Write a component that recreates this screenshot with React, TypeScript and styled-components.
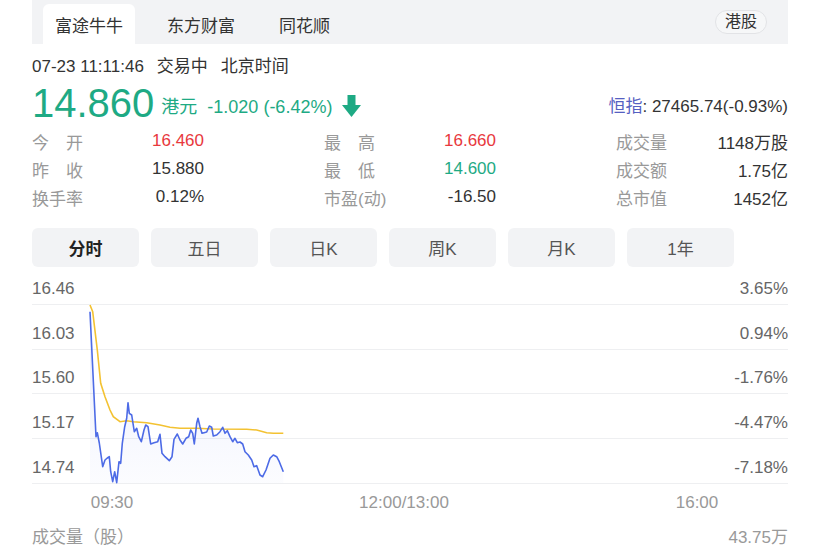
import React from 'react';
import styled, { createGlobalStyle } from 'styled-components';

const GREEN = '#1eaa84';
const RED = '#e8383d';

const GlobalStyle = createGlobalStyle`
  body {
    margin: 0;
    background: #fff;
    color: #333;
    font-family: 'Liberation Sans', 'Noto Sans CJK SC', sans-serif;
  }
`;

const Page = styled.div`
  width: 756px;
  margin-left: 32px;
`;

const TabBar = styled.div`
  display: flex;
  height: 44px;
  gap: 20px;
  padding: 0 21px 0 11px;
  background: #f2f3f5;
`;

const Tab = styled.div<{ $active?: boolean }>`
  display: flex;
  align-items: center;
  margin-top: 4px;
  padding: 0 12px;
  font-size: 17px;
  color: #333;
  border-radius: 6px 6px 0 0;
  background: ${({ $active }) => ($active ? '#fff' : 'transparent')};
`;

const MarketTag = styled.div`
  align-self: center;
  margin-left: auto;
  height: 22px;
  line-height: 22px;
  padding: 0 9px;
  font-size: 16px;
  color: #333;
  background: #f6f7f8;
  border: 1px solid #e2e3e6;
  border-radius: 12px;
`;

const TimeRow = styled.div`
  display: flex;
  gap: 13px;
  margin-top: 12px;
  font-size: 17px;
  line-height: 22px;
  color: #333;
`;

const PriceRow = styled.div`
  display: flex;
  align-items: flex-end;
  height: 46px;
  margin-top: 2px;
`;

const BigPrice = styled.div`
  font-size: 40px;
  line-height: 46px;
  color: ${GREEN};
`;

const Small = styled.div<{ $gap?: number }>`
  margin: 0 0 8px ${({ $gap }) => $gap ?? 0}px;
  font-size: 18px;
  line-height: 22px;
  color: ${GREEN};
`;

const DownArrow = styled.svg`
  margin: 0 0 9px 10px;
`;

const IndexQuote = styled.div`
  margin: 0 0 8px auto;
  font-size: 17px;
  line-height: 22px;
  color: #333;

  b {
    font-weight: normal;
    color: #5560c2;
  }
`;

const StatsGrid = styled.div`
  display: grid;
  grid-template-columns: repeat(3, 172px);
  justify-content: space-between;
  grid-auto-rows: 28px;
  margin-top: 1px;
`;

const Stat = styled.div`
  display: flex;
  align-items: center;
  justify-content: space-between;
  font-size: 17px;
`;

const StatLabel = styled.span`
  min-width: 3em;
  color: #999;
  white-space: nowrap;
  text-align-last: justify;
`;

const StatValue = styled.span<{ $color?: string }>`
  color: ${({ $color }) => $color ?? '#333'};
`;

const PeriodBar = styled.div`
  display: flex;
  gap: 12px;
  margin-top: 17px;
`;

const PeriodButton = styled.div<{ $active?: boolean }>`
  display: flex;
  align-items: center;
  justify-content: center;
  width: 107px;
  height: 39px;
  font-size: 17px;
  font-weight: ${({ $active }) => ($active ? 700 : 400)};
  color: ${({ $active }) => ($active ? '#222' : '#555')};
  background: #f2f3f5;
  border-radius: 6px;
`;

const Chart = styled.div`
  position: relative;
  margin-top: 11px;
`;

const GridRow = styled.div<{ $h: number }>`
  display: flex;
  align-items: flex-end;
  justify-content: space-between;
  box-sizing: border-box;
  height: ${({ $h }) => $h}px;
  padding-bottom: 5px;
  border-bottom: 1px solid #eeeff1;
  font-size: 17px;
  line-height: 20px;
  color: #666;
`;

const Plot = styled.svg`
  position: absolute;
  top: 0;
  left: 0;
  pointer-events: none;
`;

const Axis = styled.div`
  position: relative;
  height: 37px;
`;

const Tick = styled.span<{ $x: number }>`
  position: absolute;
  top: 9px;
  left: ${({ $x }) => $x}px;
  transform: translateX(-50%);
  font-size: 17px;
  line-height: 20px;
  color: #999;
  white-space: nowrap;
`;

const VolumeRow = styled.div`
  display: flex;
  justify-content: space-between;
  padding-top: 7px;
  font-size: 17px;
  line-height: 20px;
  color: #999;
`;

const stats: { label: string; value: string; color?: string }[] = [
  { label: '今开', value: '16.460', color: RED },
  { label: '最高', value: '16.660', color: RED },
  { label: '成交量', value: '1148万股' },
  { label: '昨收', value: '15.880' },
  { label: '最低', value: '14.600', color: GREEN },
  { label: '成交额', value: '1.75亿' },
  { label: '换手率', value: '0.12%' },
  { label: '市盈(动)', value: '-16.50' },
  { label: '总市值', value: '1452亿' },
];

const periods = ['分时', '五日', '日K', '周K', '月K', '1年'];

const gridRows = [
  { h: 27, price: '16.46', pct: '3.65%' },
  { h: 45, price: '16.03', pct: '0.94%' },
  { h: 44, price: '15.60', pct: '-1.76%' },
  { h: 45, price: '15.17', pct: '-4.47%' },
  { h: 45, price: '14.74', pct: '-7.18%' },
];

// page coordinates, the svg viewBox maps them straight onto the chart
const priceLine = [
  [90, 311.7], [96, 436.7], [97.3, 432.7], [99.3, 443], [102.7, 466.7], [105, 460],
  [107.3, 458], [109.3, 456.7], [110.7, 471.7], [112.7, 481.7], [114.7, 471.7],
  [116.7, 482.7], [119, 461.7], [120.7, 463.3], [122.3, 443.3], [124.7, 426.7],
  [126.7, 418.3], [128, 402.7], [129.3, 413.3], [131.7, 415], [134.3, 431.7],
  [136.7, 428.3], [138.7, 436.7], [141.3, 441.7], [144, 430], [145.7, 425],
  [148, 426.7], [150.7, 444], [154, 442.7], [157.7, 441.7], [160, 434.3],
  [162, 453.3], [165, 456.7], [169.3, 460.7], [172, 456.7], [174, 439.3],
  [177.3, 434], [180, 440], [182.7, 444], [186, 438.3], [188.7, 436.7],
  [190.7, 430], [192.7, 433.3], [194.3, 444], [196.7, 423.3], [198, 418.3],
  [200, 426.7], [202, 433.3], [204, 432.7], [206.7, 432], [209.3, 426],
  [211.7, 427.3], [213.3, 436], [216.7, 435], [220, 431.7], [222.7, 427.3],
  [225, 433.3], [227.3, 430.7], [230, 436.7], [232.7, 441.7], [235, 438.3],
  [237.3, 442.7], [240, 442], [242.7, 444], [245, 451.7], [248.3, 455],
  [251.7, 460], [254, 466.7], [256.7, 465.7], [260, 475], [262.7, 476.7],
  [266, 470], [270, 458.3], [273.3, 455], [276.7, 456.7], [279.3, 461.7],
  [283.3, 471.7],
];

const avgLine = [
  [90, 305], [92.7, 311.7], [97.3, 350], [100.7, 383.3], [105, 396.7], [110, 410],
  [113.3, 416.7], [120, 421.7], [126.7, 420.7], [133.3, 421.7], [146.7, 422.7],
  [160, 425], [170, 427.3], [180, 428.3], [196.7, 428.3], [213.3, 429],
  [246.7, 429.3], [256.7, 430], [266.7, 432.7], [273.3, 433.3], [283.3, 433.3],
];

const toPoints = (pts: number[][]) => pts.map(([x, y]) => `${x},${y}`).join(' ');

const fillPath =
  `M${priceLine.map(([x, y]) => `${x},${y}`).join(' L')} L283.3,483 L90,483 Z`;

export default function App() {
  return (
    <Page>
      <GlobalStyle />
      <TabBar>
        <Tab $active>富途牛牛</Tab>
        <Tab>东方财富</Tab>
        <Tab>同花顺</Tab>
        <MarketTag>港股</MarketTag>
      </TabBar>

      <TimeRow>
        <span>07-23 11:11:46</span>
        <span>交易中</span>
        <span>北京时间</span>
      </TimeRow>

      <PriceRow>
        <BigPrice>14.860</BigPrice>
        <Small $gap={7}>港元</Small>
        <Small $gap={10}>-1.020 (-6.42%)</Small>
        <DownArrow width="19" height="22" viewBox="0 0 19 22">
          <rect x="5.5" y="0" width="8" height="11" fill={GREEN} />
          <polygon points="0,10 19,10 9.5,22" fill={GREEN} />
        </DownArrow>
        <IndexQuote>
          <b>恒指</b>: 27465.74(-0.93%)
        </IndexQuote>
      </PriceRow>

      <StatsGrid>
        {stats.map((s) => (
          <Stat key={s.label}>
            <StatLabel>{s.label}</StatLabel>
            <StatValue $color={s.color}>{s.value}</StatValue>
          </Stat>
        ))}
      </StatsGrid>

      <PeriodBar>
        {periods.map((p, i) => (
          <PeriodButton key={p} $active={i === 0}>
            {p}
          </PeriodButton>
        ))}
      </PeriodBar>

      <Chart>
        {gridRows.map((r) => (
          <GridRow key={r.price} $h={r.h}>
            <span>{r.price}</span>
            <span>{r.pct}</span>
          </GridRow>
        ))}
        <Plot width="756" height="206" viewBox="32 278 756 206">
          <defs>
            <linearGradient id="fill" x1="0" y1="0" x2="0" y2="1">
              <stop offset="0" stopColor="#5470e8" stopOpacity="0.12" />
              <stop offset="1" stopColor="#5470e8" stopOpacity="0.02" />
            </linearGradient>
          </defs>
          <path d={fillPath} fill="url(#fill)" />
          <polyline points={toPoints(avgLine)} fill="none" stroke="#f3c232" strokeWidth="1.6" />
          <polyline points={toPoints(priceLine)} fill="none" stroke="#4d6be6" strokeWidth="1.6" strokeLinejoin="round" />
        </Plot>
      </Chart>

      <Axis>
        <Tick $x={80}>09:30</Tick>
        <Tick $x={372}>12:00/13:00</Tick>
        <Tick $x={665}>16:00</Tick>
      </Axis>

      <VolumeRow>
        <span>成交量（股）</span>
        <span>43.75万</span>
      </VolumeRow>
    </Page>
  );
}
